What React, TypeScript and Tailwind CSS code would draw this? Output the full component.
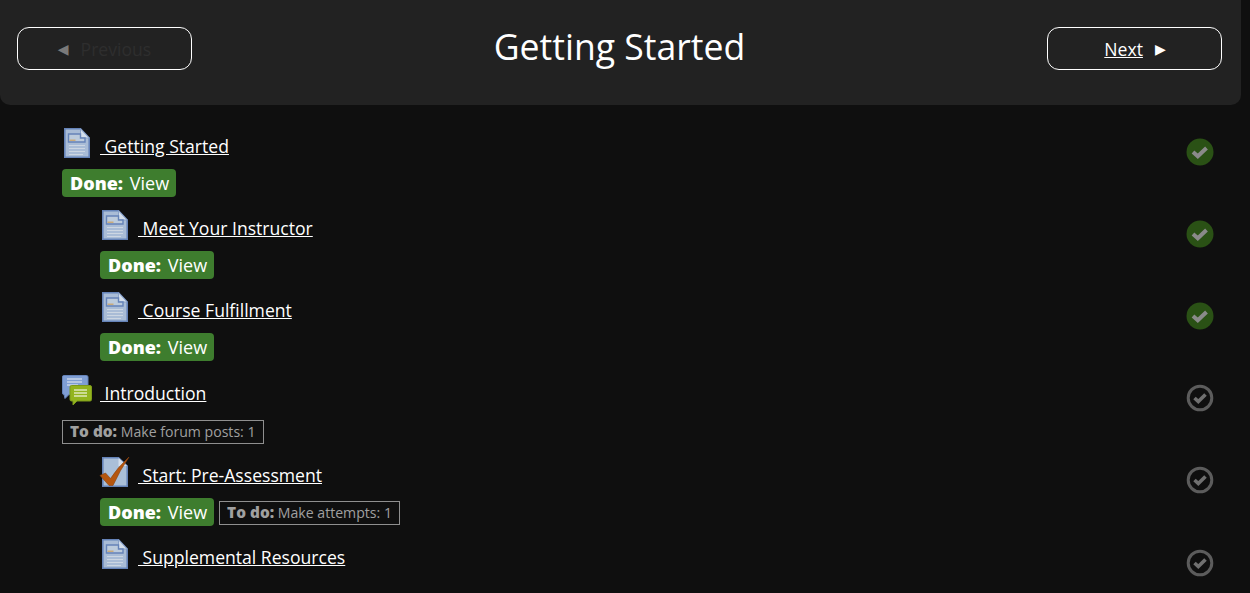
const rows = [
  { title: 'Getting Started', icon: 'page', nested: false, done: true, todo: '', complete: true },
  { title: 'Meet Your Instructor', icon: 'page', nested: true, done: true, todo: '', complete: true },
  { title: 'Course Fulfillment', icon: 'page', nested: true, done: true, todo: '', complete: true },
  { title: 'Introduction', icon: 'forum', nested: false, done: false, todo: 'Make forum posts: 1', complete: false },
  { title: 'Start: Pre-Assessment', icon: 'quiz', nested: true, done: true, todo: 'Make attempts: 1', complete: false },
  { title: 'Supplemental Resources', icon: 'page', nested: true, done: false, todo: '', complete: false },
];

function PageIcon() {
  return (
    <svg width="26" height="30" viewBox="0 0 26 30" className="shrink-0">
      <path d="M0.800 0.800H16.500L25.200 10V29.200H0.800Z" fill="#a9bcd6" stroke="#6583b8" strokeWidth="1.600" />
      <path d="M16.500 0.800V10H25.200Z" fill="#d3deeb" stroke="#8aa2c8" />
      <path d="M4.500 6H16.500V10H21V14H4.500Z" fill="#bccbdc" stroke="#6583b8" strokeWidth="1.400" />
      <rect x="5.500" y="11.500" width="6" height="1.500" fill="#c9ab7c" />
      <path d="M5 17.500H21M5 20.500H21M5 23.500H21M5 26.500H19" stroke="#ccd6e2" strokeWidth="1.200" />
    </svg>
  );
}

function ForumIcon() {
  return (
    <svg width="30" height="30" viewBox="0 0 30 30" className="shrink-0">
      <path d="M1.500 0.500H24.500Q26 0.500 26 2V18Q26 19.500 24.500 19.500H7L3 23.500L2 19.500Q0.500 19.500 0.500 18V2Q0.500 0.500 1.500 0.500Z" fill="#7f9ed4" stroke="#6583b8" />
      <path d="M5 4H20M5 7H20M5 10H16" stroke="#c9d5e8" strokeWidth="1.400" />
      <path d="M9.500 10.500H28Q29.500 10.500 29.500 12V24.500Q29.500 26 28 26H15L11 30V26H9.500Q8 26 8 24.500V12Q8 10.500 9.500 10.500Z" fill="#93b41e" stroke="#7d9a1a" />
      <path d="M12 15H25M12 18H25M12 21H25" stroke="#dfe8bb" strokeWidth="1.400" />
    </svg>
  );
}

function QuizIcon() {
  return (
    <svg width="26" height="30" viewBox="0 0 26 30" className="shrink-0 overflow-visible">
      <path d="M0.800 0.800H16.500L25.200 9V29.200H0.800Z" fill="#aabfd8" stroke="#6583b8" strokeWidth="1.600" />
      <path d="M16.500 0.800V9H25.200Z" fill="#d3deeb" />
      <path d="M-2 18.500L3.500 16L8.500 21.500Q15 11 27 0Q18 13 11 28.500H7Z" fill="#b5560f" stroke="#8c4310" strokeWidth="0.600" />
    </svg>
  );
}

function CheckIcon({ complete }: { complete: boolean }) {
  return (
    <svg width="28" height="28" viewBox="0 0 28 28" className="shrink-0">
      {complete ? (
        <circle cx="14" cy="14" r="13.500" fill="#2a5115" />
      ) : (
        <circle cx="14" cy="14" r="11.800" fill="none" stroke="#5c5c5c" strokeWidth="3" />
      )}
      {complete ? (
        <path d="M7 14L11.800 18.200L20.500 10" fill="none" stroke="#8a8a8a" strokeWidth="4" />
      ) : (
        <path d="M8.500 14L12.300 17.500L19.500 10.500" fill="none" stroke="#707070" strokeWidth="3.600" />
      )}
    </svg>
  );
}

function Row({ row }: { row: (typeof rows)[number] }) {
  return (
    <li className={`flex h-[82.2px] justify-between ${row.nested ? 'pl-[100px]' : 'pl-[62px]'}`}>
      <div>
        <div className="flex h-[31px] items-start">
          {row.icon === 'forum' ? (
            <ForumIcon />
          ) : (
            <div className="pl-0.5">{row.icon === 'quiz' ? <QuizIcon /> : <PageIcon />}</div>
          )}
          <a href="#" className={`mt-[6px] whitespace-pre text-[17.6px] leading-[25px] text-white underline ${row.icon === 'forum' ? 'ml-[8px]' : 'ml-[10px]'}`}>
            {' ' + row.title}
          </a>
        </div>
        <div className="mt-[10px] flex items-start gap-[5px]">
          {row.done && (
            <span className="rounded-[4px] bg-[#3e7d2e] pl-[8px] pr-[7px] text-[18px] leading-[28px] text-white">
              <b className="mr-0.5 font-black">Done:</b> View
            </span>
          )}
          {row.todo && (
            <span className={`border border-[#8f8f8f] px-[7px] text-[14.1px] leading-[22px] text-[#a0a0a0] ${row.done ? 'mt-[3px]' : 'mt-[4px]'}`}>
              <b className="text-[15.4px] font-black">To do:</b> {row.todo}
            </span>
          )}
        </div>
      </div>
      <div className="mr-[36px] pt-[9.6px]">
        <CheckIcon complete={row.complete} />
      </div>
    </li>
  );
}

export default function App() {
  return (
    <div className="h-[593px] overflow-hidden bg-[#0f0f0f] font-['Open_Sans','Liberation_Sans',sans-serif]">
      <header className="mr-[9px] flex h-[105px] items-start justify-between rounded-b-[10px] bg-[#222222] pl-[17px] pr-[19px] pt-[27px]">
        <a className="flex h-[43px] w-[175px] items-center justify-center gap-[12px] rounded-[12px] border border-white pt-[1px] text-[17.6px] text-[#2e2e2e]">
          <span className="font-['DejaVu_Sans'] text-[14px] text-[#7a7a7a]">◀</span> Previous
        </a>
        <h1 className="mt-[-7px] text-[35.600px] leading-[52px] text-white">Getting Started</h1>
        <a className="flex h-[43px] w-[175px] items-center justify-center gap-[12px] rounded-[12px] border border-white pl-[1px] pt-[1px] text-[17.6px] text-white">
          <span className="underline">Next</span> <span className="font-['DejaVu_Sans'] text-[14px]">▶</span>
        </a>
      </header>
      <ul className="pt-[23px]">
        {rows.map((row) => (
          <Row key={row.title} row={row} />
        ))}
      </ul>
    </div>
  );
}
